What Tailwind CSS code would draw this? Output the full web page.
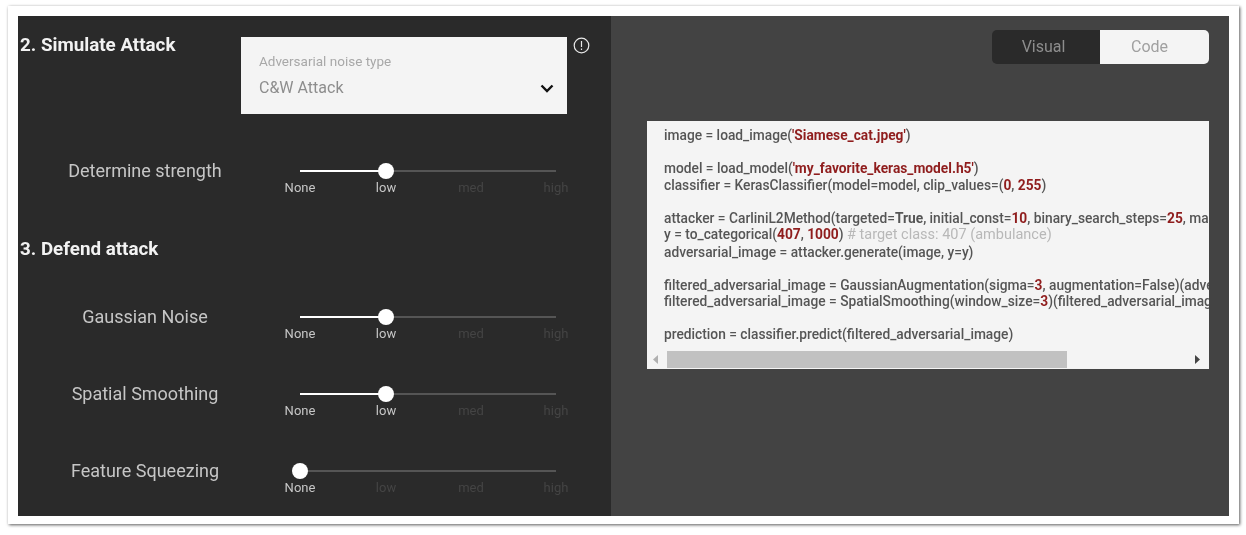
<!DOCTYPE html>
<html lang="en">
  <head>
    <meta charset="UTF-8" />
    <title>Adversarial attack demo</title>
    <script src="https://cdn.jsdelivr.net/npm/@tailwindcss/browser@4"></script>
  </head>
  <body class="bg-white font-['Roboto',sans-serif] w-[1246px] h-[535px] overflow-hidden">
    <!-- Screenshot frame -->
    <div class="ml-[8px] mt-[6px] w-[1231px] h-[518px] p-[10px] bg-white shadow-[1px_1px_3px_rgba(0,0,0,0.65)]">
      <div class="flex h-[500px] blur-[0.5px]">
        <!-- Left panel -->
        <div class="w-[594px] bg-[#2a2a2a] flex flex-col">
          <div class="flex h-[98px] pt-[21px]">
            <h2 class="w-[223px] pl-[2px] text-[18.8px] leading-[20px] font-bold text-[#f2f2f2] mt-[-2px] whitespace-nowrap">2. Simulate Attack</h2>
            <div class="w-[326px] h-[77px] bg-[#f4f4f4] pl-[18px] pr-[12px] pt-[16px]">
              <p class="text-[13.5px] leading-[16px] text-[#a8a8a8]">Adversarial noise type</p>
              <div class="flex items-center justify-between mt-[9px]">
                <span class="text-[16px] leading-[20px] text-[#8d8d8d]">C&amp;W Attack</span>
                <svg width="16" height="16" viewBox="0 0 16 16" fill="none" stroke="#111" stroke-width="2.4">
                  <path d="M2.5 5.5 8 11l5.5-5.5" />
                </svg>
              </div>
            </div>
            <svg class="ml-[6px]" width="17" height="17" viewBox="0 0 17 17" fill="none" stroke="#e8e8e8" stroke-width="1.2">
              <circle cx="8.5" cy="8.5" r="7.3" />
              <path d="M8.5 4v6M8.5 11.5v1.5" />
            </svg>
          </div>

          <div class="flex h-[48px] mt-[45px]">
            <span class="w-[254px] text-center text-[18px] leading-[24px] text-[#c6c6c6]">Determine strength</span>
            <div class="relative w-[256px] ml-[28px] h-[24px]">
              <div class="absolute left-0 right-0 top-[11px] h-[2px] bg-[#555555]"></div>
              <div class="absolute left-0 w-[86px] top-[11px] h-[2px] bg-white"></div>
              <div class="absolute left-[78px] top-[4px] w-[16px] h-[16px] rounded-full bg-white"></div>
              <div class="absolute left-[-30px] top-[20px] flex text-[13px] leading-[18px]">
                <span class="w-[60px] text-center text-[#c6c6c6]">None</span>
                <span class="w-[60px] ml-[26px] text-center text-[#c6c6c6]">low</span>
                <span class="w-[60px] ml-[25px] text-center text-[#444444]">med</span>
                <span class="w-[60px] ml-[25px] text-center text-[#444444]">high</span>
              </div>
            </div>
          </div>

          <h2 class="pl-[2px] mt-[32px] text-[18.8px] leading-[20px] font-bold text-[#f2f2f2]">3. Defend attack</h2>

          <div class="flex h-[24px] mt-[46px]">
            <span class="w-[254px] text-center text-[18px] leading-[24px] text-[#c6c6c6]">Gaussian Noise</span>
            <div class="relative w-[256px] ml-[28px] h-[24px]">
              <div class="absolute left-0 right-0 top-[11px] h-[2px] bg-[#555555]"></div>
              <div class="absolute left-0 w-[86px] top-[11px] h-[2px] bg-white"></div>
              <div class="absolute left-[78px] top-[4px] w-[16px] h-[16px] rounded-full bg-white"></div>
              <div class="absolute left-[-30px] top-[20px] flex text-[13px] leading-[18px]">
                <span class="w-[60px] text-center text-[#c6c6c6]">None</span>
                <span class="w-[60px] ml-[26px] text-center text-[#c6c6c6]">low</span>
                <span class="w-[60px] ml-[25px] text-center text-[#444444]">med</span>
                <span class="w-[60px] ml-[25px] text-center text-[#444444]">high</span>
              </div>
            </div>
          </div>

          <div class="flex h-[24px] mt-[53px]">
            <span class="w-[254px] text-center text-[18px] leading-[24px] text-[#c6c6c6]">Spatial Smoothing</span>
            <div class="relative w-[256px] ml-[28px] h-[24px]">
              <div class="absolute left-0 right-0 top-[11px] h-[2px] bg-[#555555]"></div>
              <div class="absolute left-0 w-[86px] top-[11px] h-[2px] bg-white"></div>
              <div class="absolute left-[78px] top-[4px] w-[16px] h-[16px] rounded-full bg-white"></div>
              <div class="absolute left-[-30px] top-[20px] flex text-[13px] leading-[18px]">
                <span class="w-[60px] text-center text-[#c6c6c6]">None</span>
                <span class="w-[60px] ml-[26px] text-center text-[#c6c6c6]">low</span>
                <span class="w-[60px] ml-[25px] text-center text-[#444444]">med</span>
                <span class="w-[60px] ml-[25px] text-center text-[#444444]">high</span>
              </div>
            </div>
          </div>

          <div class="flex h-[24px] mt-[53px]">
            <span class="w-[254px] text-center text-[18px] leading-[24px] text-[#c6c6c6]">Feature Squeezing</span>
            <div class="relative w-[256px] ml-[28px] h-[24px]">
              <div class="absolute left-0 right-0 top-[11px] h-[2px] bg-[#555555]"></div>
              <div class="absolute left-[-8px] top-[4px] w-[16px] h-[16px] rounded-full bg-white"></div>
              <div class="absolute left-[-30px] top-[20px] flex text-[13px] leading-[18px]">
                <span class="w-[60px] text-center text-[#c6c6c6]">None</span>
                <span class="w-[60px] ml-[26px] text-center text-[#444444]">low</span>
                <span class="w-[60px] ml-[25px] text-center text-[#444444]">med</span>
                <span class="w-[60px] ml-[25px] text-center text-[#444444]">high</span>
              </div>
            </div>
          </div>
        </div>

        <!-- Right panel -->
        <div class="flex-1 bg-[#434343] pl-[36px] pr-[20px] pt-[14px] flex flex-col">
          <div class="self-end flex w-[217px] h-[34px] rounded-[5px] overflow-hidden text-[16px]">
            <div class="w-[108px] pr-[5px] bg-[#2a2a2a] text-[#8d8d8d] flex items-center justify-center">Visual</div>
            <div class="flex-1 pr-[10px] bg-[#f4f4f4] text-[#a0a0a0] flex items-center justify-center">Code</div>
          </div>

          <!-- Code box -->
          <div class="mt-[57px] w-[562px] h-[248px] bg-[#f4f4f4] flex flex-col">
            <div class="h-[229px] overflow-hidden pl-[17px] pt-[6px] text-[13.75px] leading-[16.5px] font-medium text-[#555555] whitespace-nowrap">
              <p>image = load_image(<span class="font-bold text-[#8f1d1d]">'Siamese_cat.jpeg'</span>)</p>
              <p class="mt-[16.5px]">model = load_model(<span class="font-bold text-[#8f1d1d]">'my_favorite_keras_model.h5'</span>)</p>
              <p>classifier = KerasClassifier(model=model, clip_values=(<span class="font-bold text-[#8f1d1d]">0</span>, <span class="font-bold text-[#8f1d1d]">255</span>)</p>
              <p class="mt-[16.5px]">attacker = CarliniL2Method(targeted=<span class="font-bold">True</span>, initial_const=<span class="font-bold text-[#8f1d1d]">10</span>, binary_search_steps=<span class="font-bold text-[#8f1d1d]">25</span>, max_iter=<span class="font-bold text-[#8f1d1d]">100</span>)</p>
              <p>y = to_categorical(<span class="font-bold text-[#8f1d1d]">407</span>, <span class="font-bold text-[#8f1d1d]">1000</span>) <span class="text-[14.5px] font-normal text-[#b8b8b8]"># target class: 407 (ambulance)</span></p>
              <p>adversarial_image = attacker.generate(image, y=y)</p>
              <p class="mt-[16.5px]">filtered_adversarial_image = GaussianAugmentation(sigma=<span class="font-bold text-[#8f1d1d]">3</span>, augmentation=False)(adversarial_image)</p>
              <p>filtered_adversarial_image = SpatialSmoothing(window_size=<span class="font-bold text-[#8f1d1d]">3</span>)(filtered_adversarial_image)</p>
              <p class="mt-[16.5px]">prediction = classifier.predict(filtered_adversarial_image)</p>
            </div>
            <!-- Scrollbar -->
            <div class="h-[19px] flex items-center">
              <svg class="ml-[6px]" width="6" height="9" viewBox="0 0 6 9" fill="#b0b0b0"><path d="M5 0v9L0 4.5z" /></svg>
              <div class="ml-[8px] w-[400px] h-[17px] bg-[#c1c1c1]"></div>
              <svg class="ml-[127px]" width="6" height="9" viewBox="0 0 6 9" fill="#444444"><path d="M1 0v9l5-4.5z" /></svg>
            </div>
          </div>
        </div>
      </div>
    </div>
  </body>
</html>
